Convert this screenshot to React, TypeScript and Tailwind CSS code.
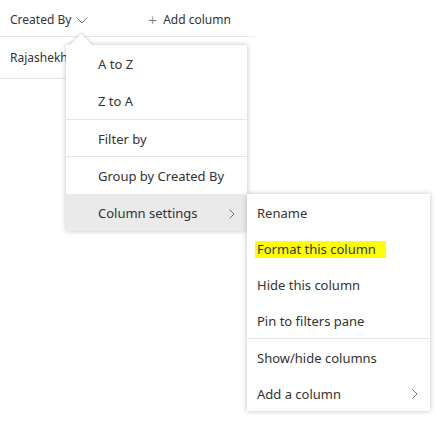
import React from "react";

const font = { fontFamily: '"Segoe UI", "Noto Sans", "Open Sans", sans-serif' };

function Chevron({ className }: { className?: string }) {
  return (
    <svg width="8" height="12" viewBox="0 0 8 12" className={className}>
      <path d="M1.5 1.5 L6 6 L1.5 10.5" fill="none" stroke="#777" strokeWidth="1" />
    </svg>
  );
}

function Item({ children, active, chevron, highlight, h = "h-[36px]" }: { children: React.ReactNode; active?: boolean; chevron?: boolean; highlight?: boolean; h?: string }) {
  return (
    <div className={`${h} pt-[2px] flex items-center justify-between pr-[11px] ${active ? "bg-[#eaeaea]" : ""}`}>
      <span className={`text-[13px] text-[#333] leading-[17px] ${highlight ? "bg-[#ffff00] pr-[10px] pl-[2px] -ml-[2px]" : ""}`}>{children}</span>
      {chevron && <Chevron />}
    </div>
  );
}

export default function App() {
  return (
    <div className="relative w-[442px] h-[423px] bg-white overflow-hidden" style={font}>
      <div className="w-[255px] h-[37px] pt-[4px] border-b border-[#e8e8e8] flex items-center text-[12px] text-[#333]">
        <div className="pl-[10px] flex items-center gap-[4px] w-[148px]">
          <span>Created By</span>
          <svg width="14" height="10" viewBox="0 0 14 10">
            <path d="M1.5 2.5 L7 8 L12.5 2.5" fill="none" stroke="#777" strokeWidth="1" />
          </svg>
        </div>
        <div className="flex items-center gap-[6px]">
          <span className="text-[16px] text-[#777] font-light leading-none">+</span>
          <span>Add column</span>
        </div>
      </div>
      <div className="w-[66px] h-[42px] border-b border-[#e8e8e8] flex items-center pl-[10px] text-[12px] text-[#333] whitespace-nowrap">
        Rajashekhar
      </div>

      {/* First menu */}
      <div className="absolute left-[66px] top-[45px] w-[181px] bg-white shadow-[0_0_5px_rgba(0,0,0,0.25)]">
        <div className="absolute -top-[8px] left-[7px] w-[16px] h-[16px] bg-white rotate-45 shadow-[-1px_-1px_3px_rgba(0,0,0,0.15)]" />
        <div className="relative bg-white">
          <div className="pl-[32px]">
            <Item h="h-[37px]">A to Z</Item>
            <Item h="h-[37px]">Z to A</Item>
          </div>
          <div className="h-px bg-[#e6e6e6]" />
          <div className="pl-[32px]">
            <Item h="h-[36px]">Filter by</Item>
          </div>
          <div className="h-px bg-[#e6e6e6]" />
          <div className="pl-[32px]">
            <Item h="h-[37px]">Group by Created By</Item>
          </div>
          <div className="pl-[32px] bg-[#eaeaea]">
            <Item h="h-[37px]" active chevron>Column settings</Item>
          </div>
        </div>
      </div>

      {/* Submenu */}
      <div className="absolute left-[247px] top-[194px] w-[183px] bg-white shadow-[0_0_5px_rgba(0,0,0,0.25)]">
        <div className="pl-[10px]">
          <Item>Rename</Item>
          <Item highlight>Format this column</Item>
          <Item>Hide this column</Item>
          <Item>Pin to filters pane</Item>
        </div>
        <div className="h-px bg-[#e6e6e6]" />
        <div className="pl-[10px]">
          <Item>Show/hide columns</Item>
          <Item chevron>Add a column</Item>
        </div>
      </div>
    </div>
  );
}
